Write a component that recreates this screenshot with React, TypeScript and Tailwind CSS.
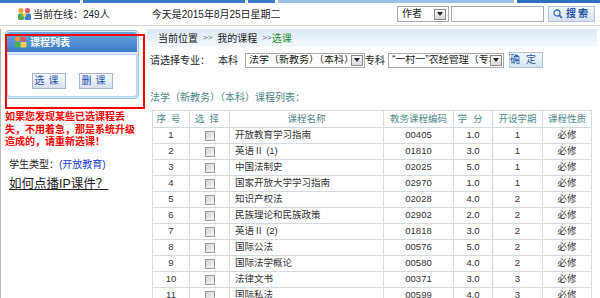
import React from 'react';

const rows = [
  { no: 1, name: '开放教育学习指南', code: '00405', credit: '1.0', term: '1' },
  { no: 2, name: '英语Ⅱ (1)', code: '01810', credit: '3.0', term: '1' },
  { no: 3, name: '中国法制史', code: '02025', credit: '5.0', term: '1' },
  { no: 4, name: '国家开放大学学习指南', code: '02970', credit: '1.0', term: '1' },
  { no: 5, name: '知识产权法', code: '02028', credit: '4.0', term: '2' },
  { no: 6, name: '民族理论和民族政策', code: '02902', credit: '2.0', term: '2' },
  { no: 7, name: '英语Ⅱ (2)', code: '01818', credit: '3.0', term: '2' },
  { no: 8, name: '国际公法', code: '00576', credit: '5.0', term: '2' },
  { no: 9, name: '国际法学概论', code: '00580', credit: '4.0', term: '2' },
  { no: 10, name: '法律文书', code: '00371', credit: '3.0', term: '3' },
  { no: 11, name: '国际私法', code: '00599', credit: '4.0', term: '3' },
];

const PeopleIcon = () => (
  <svg width="15" height="14" viewBox="0 0 15 14">
    <circle cx="4" cy="3.5" r="2.6" fill="#f2a33a" />
    <circle cx="10.5" cy="3.5" r="2.6" fill="#e35b5b" />
    <rect x="1" y="6.5" width="6" height="6.5" rx="1.5" fill="#4caf50" />
    <rect x="7.5" y="6.5" width="6.5" height="6.5" rx="1.5" fill="#3f7fd0" />
    <circle cx="7.5" cy="8" r="2" fill="#f6d04d" />
  </svg>
);

const DropArrow = () => (
  <span className="flex h-[11px] w-[12px] shrink-0 items-center justify-center border border-[#8a8a8a] bg-gradient-to-b from-[#fafafa] to-[#d8d8d8]">
    <svg width="6" height="4" viewBox="0 0 6 4">
      <path d="M0 0h6L3 4z" fill="#222" />
    </svg>
  </span>
);

const Select = ({ text, w }: { text: string; w: string }) => (
  <div className={`flex h-[15px] items-center justify-between border border-[#a5acb5] bg-white pl-[3px] pr-[1px] ${w}`}>
    <span className="overflow-hidden whitespace-nowrap text-[10px] leading-none text-[#222]">{text}</span>
    <DropArrow />
  </div>
);

const GrayButton = ({ label }: { label: string }) => (
  <button className="flex h-[16px] w-[34px] items-center justify-center border border-[#a9b6c6] bg-gradient-to-b from-[#f4f8fc] to-[#d5e1ee] text-[10px] leading-none tracking-[4px] text-[#1f55a8]">
    {label}
  </button>
);

const Checkbox = () => (
  <span className="inline-block h-[10px] w-[10px] border border-[#9a9a9a] bg-gradient-to-br from-[#d6d6d6] to-[#f4f4f4] align-middle" />
);

export default function App() {
  return (
    <div className="relative h-[298px] w-[600px] overflow-hidden bg-white font-['Liberation_Sans','Noto_Sans_CJK_SC',sans-serif] text-[#222]">
      {/* top tab strip */}
      <div className="flex h-[3px] gap-[3px]">
        <div className="w-[80px] bg-[#3a7bc8]" />
        <div className="w-[162px] bg-[#3a7bc8]" />
        <div className="w-[27px] bg-[#3a7bc8]" />
        <div className="w-[236px] bg-[#9cc0e6]" />
        <div className="flex-1 bg-[#2f6fbf]" />
      </div>

      {/* header */}
      <header className="flex h-[23px] items-center border-b border-[#d8d8d8] pl-[17px] pr-[5px]">
        <PeopleIcon />
        <span className="ml-[1px] text-[10px]">当前在线：249人</span>
        <span className="ml-[42px] text-[10px]">今天是2015年8月25日星期二</span>
        <div className="ml-auto flex items-center">
          <div className="flex h-[16px] w-[52px] items-center justify-between border border-[#a5acb5] bg-white pl-[4px] pr-[2px]">
            <span className="text-[10px] leading-none">作者</span>
            <DropArrow />
          </div>
          <div className="ml-[2px] h-[16px] w-[93px] border border-[#a5acb5] bg-white" />
          <button className="ml-[4px] flex h-[16px] w-[47px] items-center justify-center gap-[3px] border border-[#b5c5d8] bg-gradient-to-b from-[#f3f8fd] to-[#d3e2f2] text-[10px] font-bold leading-none text-[#1f55a8]">
            <svg width="10" height="10" viewBox="0 0 10 10">
              <circle cx="4" cy="4" r="3" fill="#e8f2fc" stroke="#3b6fb0" strokeWidth="1.3" />
              <path d="M6.2 6.2L9 9" stroke="#3b6fb0" strokeWidth="1.8" />
            </svg>
            <span className="tracking-[2px]">搜索</span>
          </button>
        </div>
      </header>

      <div className="flex h-[272px] pt-[3px]">
        {/* left column */}
        <aside className="relative w-[145px] border-l border-[#b9b9b9] pl-[4px]">
          <div className="mt-[1px] w-[134px] rounded-[4px] border border-[#9fc0e2] bg-[#d9e8f7] p-[1px]">
            <div className="flex h-[20px] items-center gap-[2px] rounded-t-[3px] bg-gradient-to-b from-[#6aa7e0] to-[#3c7cc6] pl-[7px]">
              <svg width="14" height="12" viewBox="0 0 14 12">
                <circle cx="3.5" cy="3" r="2.5" fill="#f39c3b" />
                <circle cx="9" cy="3" r="2.5" fill="#e25555" />
                <rect x="1" y="6" width="5" height="5.5" rx="1" fill="#49b04f" />
                <rect x="6.5" y="6" width="6" height="5.5" rx="1" fill="#f2d04b" />
              </svg>
              <span className="text-[10px] font-bold text-white">课程列表</span>
            </div>
            <div className="mt-[2px] flex h-[43px] items-center justify-center gap-[13px] rounded-b-[3px] border border-[#b7cfe8] bg-white pt-[10px]">
              <GrayButton label="选课" />
              <GrayButton label="删课" />
            </div>
          </div>

          <p className="mt-[12px] w-[136px] text-[10px] font-bold leading-[12.5px] text-[#ff0000]">
            如果您发现某些已选课程丢失，不用着急，那是系统升级造成的，请重新选课！
          </p>

          <p className="mt-[8px] pl-[4px] text-[10px]">
            学生类型：<span className="text-[#1a3fd0]">(开放教育)</span>
          </p>
          <p className="mt-[4px] pl-[4px] text-[12.5px] leading-[16px] underline">如何点播IP课件？</p>

          {/* red annotation frame */}
          <div className="pointer-events-none absolute left-[4px] top-[5px] h-[75px] w-[140px] border-2 border-[#ff0000]" />
        </aside>

        {/* right column */}
        <main className="flex-1 pl-[2px] pr-[3px]">
          <div className="flex h-[18px] items-center bg-gradient-to-b from-[#dde9f6] to-[#f3f8fc] pl-[11px] text-[10px]">
            <span>当前位置</span>
            <span className="mx-[5px] text-[8px] text-[#666]">&gt;&gt;</span>
            <span>我的课程</span>
            <span className="ml-[5px] text-[8px] text-[#666]">&gt;&gt;</span>
            <span className="text-[#2a8a2a]">选课</span>
          </div>

          <div className="mt-[5px] flex h-[16px] items-center pl-[3px] text-[10px]">
            <span>请选择专业：</span>
            <span className="ml-[8px]">本科</span>
            <div className="ml-[7px]">
              <Select text="法学（新教务）（本科）" w="w-[120px]" />
            </div>
            <span>专科</span>
            <div className="ml-[3px]">
              <Select text="“一村一”农经管理（专科）" w="w-[116px]" />
            </div>
            <button className="ml-[5px] flex h-[16px] w-[34px] items-center justify-center border border-[#b5c5d8] bg-gradient-to-b from-[#f3f8fd] to-[#d3e2f2] text-[10px] leading-none tracking-[6px] text-[#1f55a8]">
              确定
            </button>
          </div>

          <p className="mt-[23px] pl-[3px] text-[10px] leading-[14px] text-[#4a8585]">法学（新教务）（本科）课程列表：</p>

          <table className="ml-[5px] mt-[5px] w-[439px] table-fixed border-collapse text-[9.5px]">
            <colgroup>
              <col className="w-[37px]" />
              <col className="w-[40px]" />
              <col className="w-[154px]" />
              <col className="w-[70px]" />
              <col className="w-[39px]" />
              <col className="w-[50px]" />
              <col className="w-[49px]" />
            </colgroup>
            <thead>
              <tr className="h-[17px] text-[#4f8a8a]">
                <th className="border border-[#cfdae2] font-normal tracking-[5px]">序号</th>
                <th className="border border-[#cfdae2] font-normal tracking-[5px]">选择</th>
                <th className="border border-[#cfdae2] font-normal">课程名称</th>
                <th className="border border-[#cfdae2] font-normal">教务课程编码</th>
                <th className="border border-[#cfdae2] font-normal tracking-[6px]">学分</th>
                <th className="border border-[#cfdae2] font-normal">开设学期</th>
                <th className="border border-[#cfdae2] font-normal">课程性质</th>
              </tr>
            </thead>
            <tbody className="text-[#333]">
              {rows.map(r => (
                <tr key={r.no} className="h-[16px]">
                  <td className="border border-[#cfdae2] text-center">{r.no}</td>
                  <td className="border border-[#cfdae2] text-center leading-none">
                    <Checkbox />
                  </td>
                  <td className="border border-[#cfdae2] pl-[5px]">{r.name}</td>
                  <td className="border border-[#cfdae2] text-center">{r.code}</td>
                  <td className="border border-[#cfdae2] text-center">{r.credit}</td>
                  <td className="border border-[#cfdae2] text-center">{r.term}</td>
                  <td className="border border-[#cfdae2] text-center">必修</td>
                </tr>
              ))}
            </tbody>
          </table>
        </main>
      </div>
    </div>
  );
}
